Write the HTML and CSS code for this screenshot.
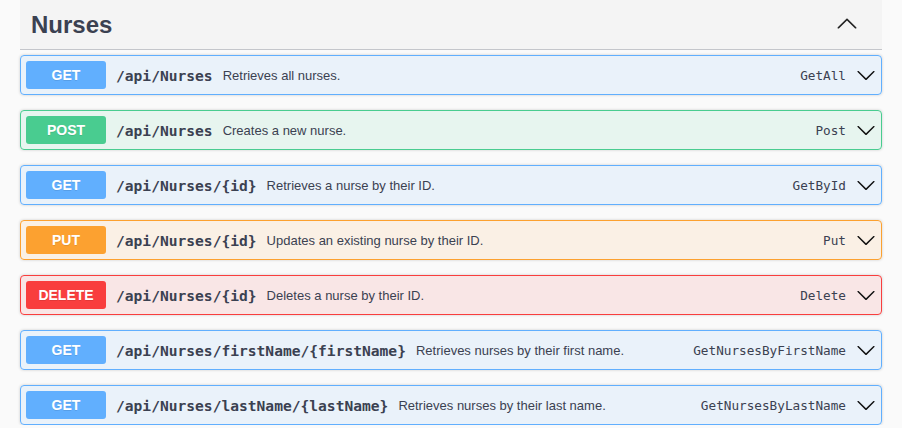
FILE: index.html
```html
<!DOCTYPE html>
<html lang="en">
<head>
<meta charset="utf-8">
<title>Nurses</title>
<link rel="stylesheet" href="styles.css">
</head>
<body>
<div class="wrap">
  <div class="tag">
    <h3 class="tag-title">Nurses</h3>
    <svg class="tag-arrow" viewBox="0 0 20 20" width="22" height="22"><path d="M17.418 14.908c.272.268.709.268.979 0s.271-.701 0-.969l-7.908-7.83c-.27-.268-.707-.268-.979 0l-7.908 7.83c-.27.268-.27.701 0 .969.271.268.709.268.979 0L10 7.75l7.418 7.158z"/></svg>
  </div>
  <div class="ops">
    <div class="op get">
      <span class="method">GET</span>
      <span class="path">/api/Nurses</span>
      <span class="desc">Retrieves all nurses.</span>
      <span class="opid">GetAll</span>
      <svg class="arrow" viewBox="0 0 20 20" width="20" height="20"><path d="M17.418 6.109c.272-.268.709-.268.979 0s.271.701 0 .969l-7.908 7.83c-.27.268-.707.268-.979 0l-7.908-7.83c-.27-.268-.27-.701 0-.969.271-.268.709-.268.979 0L10 13.25l7.418-7.141z"/></svg>
    </div>
    <div class="op post">
      <span class="method">POST</span>
      <span class="path">/api/Nurses</span>
      <span class="desc">Creates a new nurse.</span>
      <span class="opid">Post</span>
      <svg class="arrow" viewBox="0 0 20 20" width="20" height="20"><path d="M17.418 6.109c.272-.268.709-.268.979 0s.271.701 0 .969l-7.908 7.83c-.27.268-.707.268-.979 0l-7.908-7.83c-.27-.268-.27-.701 0-.969.271-.268.709-.268.979 0L10 13.25l7.418-7.141z"/></svg>
    </div>
    <div class="op get">
      <span class="method">GET</span>
      <span class="path">/api/Nurses/{id}</span>
      <span class="desc">Retrieves a nurse by their ID.</span>
      <span class="opid">GetById</span>
      <svg class="arrow" viewBox="0 0 20 20" width="20" height="20"><path d="M17.418 6.109c.272-.268.709-.268.979 0s.271.701 0 .969l-7.908 7.83c-.27.268-.707.268-.979 0l-7.908-7.83c-.27-.268-.27-.701 0-.969.271-.268.709-.268.979 0L10 13.25l7.418-7.141z"/></svg>
    </div>
    <div class="op put">
      <span class="method">PUT</span>
      <span class="path">/api/Nurses/{id}</span>
      <span class="desc">Updates an existing nurse by their ID.</span>
      <span class="opid">Put</span>
      <svg class="arrow" viewBox="0 0 20 20" width="20" height="20"><path d="M17.418 6.109c.272-.268.709-.268.979 0s.271.701 0 .969l-7.908 7.83c-.27.268-.707.268-.979 0l-7.908-7.83c-.27-.268-.27-.701 0-.969.271-.268.709-.268.979 0L10 13.25l7.418-7.141z"/></svg>
    </div>
    <div class="op delete">
      <span class="method">DELETE</span>
      <span class="path">/api/Nurses/{id}</span>
      <span class="desc">Deletes a nurse by their ID.</span>
      <span class="opid">Delete</span>
      <svg class="arrow" viewBox="0 0 20 20" width="20" height="20"><path d="M17.418 6.109c.272-.268.709-.268.979 0s.271.701 0 .969l-7.908 7.83c-.27.268-.707.268-.979 0l-7.908-7.83c-.27-.268-.27-.701 0-.969.271-.268.709-.268.979 0L10 13.25l7.418-7.141z"/></svg>
    </div>
    <div class="op get">
      <span class="method">GET</span>
      <span class="path">/api/Nurses/firstName/{firstName}</span>
      <span class="desc">Retrieves nurses by their first name.</span>
      <span class="opid">GetNursesByFirstName</span>
      <svg class="arrow" viewBox="0 0 20 20" width="20" height="20"><path d="M17.418 6.109c.272-.268.709-.268.979 0s.271.701 0 .969l-7.908 7.83c-.27.268-.707.268-.979 0l-7.908-7.83c-.27-.268-.27-.701 0-.969.271-.268.709-.268.979 0L10 13.25l7.418-7.141z"/></svg>
    </div>
    <div class="op get">
      <span class="method">GET</span>
      <span class="path">/api/Nurses/lastName/{lastName}</span>
      <span class="desc">Retrieves nurses by their last name.</span>
      <span class="opid">GetNursesByLastName</span>
      <svg class="arrow" viewBox="0 0 20 20" width="20" height="20"><path d="M17.418 6.109c.272-.268.709-.268.979 0s.271.701 0 .969l-7.908 7.83c-.27.268-.707.268-.979 0l-7.908-7.83c-.27-.268-.27-.701 0-.969.271-.268.709-.268.979 0L10 13.25l7.418-7.141z"/></svg>
    </div>
  </div>
</div>
</body>
</html>
```

FILE: styles.css
```css
html, body {
  margin: 0;
  padding: 0;
  background: #fafafa;
  font-family: "Liberation Sans", Arial, sans-serif;
  color: #3b4151;
}

.wrap {
  padding: 0 20px;
}

.tag {
  display: flex;
  align-items: center;
  height: 49px;
  background: #f4f4f4;
  border-bottom: 1px solid #c4c6cb;
  padding: 0 24px 0 11px;
  margin-bottom: 5px;
}

.tag-title {
  flex: 1;
  margin: 0;
  font-size: 24px;
  font-weight: 700;
  color: #3b4151;
}

.tag-arrow {
  fill: #222;
  margin-top: -3px;
}

.ops {
  display: flex;
  flex-direction: column;
  gap: 15px;
}

.op {
  display: flex;
  align-items: center;
  padding: 5px;
  border: 1px solid;
  border-radius: 4px;
  box-shadow: 0 0 3px rgba(0, 0, 0, 0.19);
}

.method {
  min-width: 80px;
  padding: 6px 0;
  text-align: center;
  color: #fff;
  font-size: 14px;
  font-weight: 700;
  line-height: 16px;
  border-radius: 3px;
  text-shadow: 0 1px 0 rgba(0, 0, 0, 0.1);
}

.path {
  padding: 0 10px;
  font-family: "DejaVu Sans Mono", monospace;
  font-weight: 700;
  font-size: 14.6px;
  color: #3b4151;
}

.desc {
  flex: 1;
  font-size: 13px;
  color: #3b4151;
}

.opid {
  font-family: "DejaVu Sans Mono", monospace;
  font-size: 12.7px;
  color: #3b4151;
  padding-right: 10px;
}

.arrow {
  fill: #111;
}

.get { background: rgba(97, 175, 254, 0.1); border-color: #61affe; }
.get .method { background: #61affe; }
.post { background: rgba(73, 204, 144, 0.1); border-color: #49cc90; }
.post .method { background: #49cc90; }
.put { background: rgba(252, 161, 48, 0.1); border-color: #fca130; }
.put .method { background: #fca130; }
.delete { background: rgba(249, 62, 62, 0.1); border-color: #f93e3e; }
.delete .method { background: #f93e3e; }
```
